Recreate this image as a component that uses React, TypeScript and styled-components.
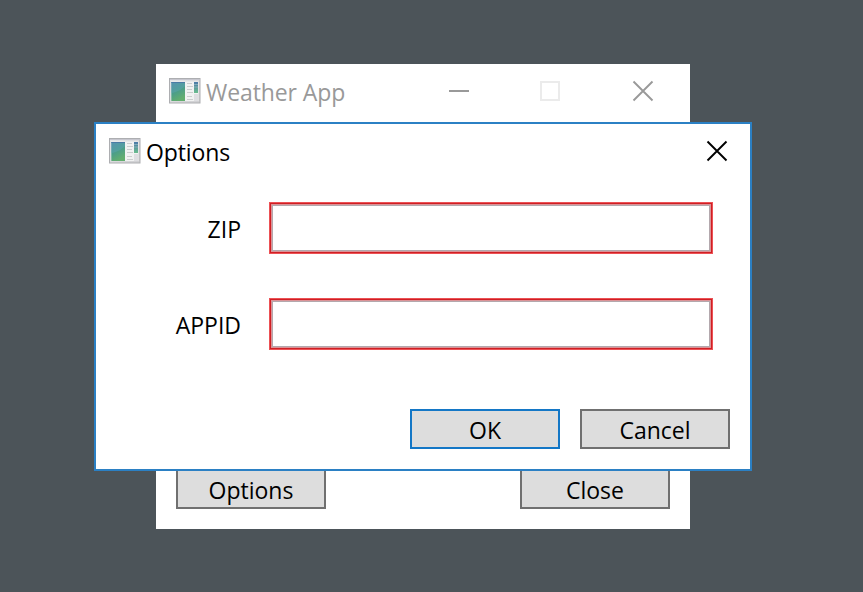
import React from "react";
import styled, { createGlobalStyle } from "styled-components";

const GlobalStyle = createGlobalStyle`
  *, *::before, *::after { box-sizing: border-box; }
  body { margin: 0; background: #4c5459; }
`;

const Desktop = styled.main`
  position: relative;
  width: 863px;
  height: 592px;
  overflow: hidden;
  background: #4c5459;
  color: #000;
  font-family: "Open Sans", "Noto Sans", sans-serif;
  font-size: 23px;
`;

const MainWindow = styled.section`
  position: absolute;
  left: 156px;
  top: 64px;
  width: 534px;
  height: 465px;
  display: flex;
  flex-direction: column;
  justify-content: space-between;
  background: #fff;
`;

const DialogWindow = styled.section`
  position: absolute;
  left: 94px;
  top: 122px;
  width: 658px;
  height: 349px;
  display: flex;
  flex-direction: column;
  border: 2px solid #2b80c4;
  background: #fff;
`;

const TitleBar = styled.header<{ $endPadding: number }>`
  display: flex;
  align-items: center;
  height: 54px;
  padding: 0 ${(p) => p.$endPadding}px 0 13px;
`;

const AppIcon = styled.svg`
  display: block;
  flex: none;
  width: 32px;
  height: 26px;
`;

const Title = styled.h1<{ $muted?: boolean }>`
  flex: 1;
  margin: 2px 0 0 5px;
  color: ${(p) => (p.$muted ? "#999" : "#000")};
  font-size: 23px;
  font-weight: 400;
  line-height: 32px;
  letter-spacing: -0.1px;
  white-space: nowrap;
`;

const WindowControls = styled.div`
  display: flex;
  gap: 71px;
`;

const ControlButton = styled.button<{ $wide?: boolean }>`
  display: block;
  width: 20px;
  height: 20px;
  padding: 0;
  border: 0;
  background: transparent;
  margin-left: ${(p) => (p.$wide ? "2px" : "0")};
`;

const Glyph = styled.svg`
  display: block;
  width: 20px;
  height: 20px;
  overflow: visible;
`;

const Form = styled.form`
  display: flex;
  flex: 1;
  flex-direction: column;
  padding: 24px 37px 0 0;
`;

const FieldRow = styled.div`
  display: grid;
  grid-template-columns: 145px 444px;
  column-gap: 28px;
  align-items: center;
  height: 52px;
  margin-bottom: 44px;
`;

const FieldLabel = styled.label`
  padding-top: 1px;
  line-height: 32px;
  text-align: right;
`;

const FieldInput = styled.input`
  width: 444px;
  height: 52px;
  padding: 0 6px;
  border: 1px solid #ec5155;
  border-radius: 0;
  outline: none;
  background: #fff;
  box-shadow: inset 0 0 0 1px #cf1f24, inset 0 0 0 2px #dc9296, inset 0 0 0 3px #b3a8ad;
  font: inherit;
`;

const ButtonRow = styled.footer<{ $spread?: boolean }>`
  display: flex;
  justify-content: ${(p) => (p.$spread ? "space-between" : "flex-end")};
  gap: 20px;
  padding: 0 20px 20px;
`;

const PushButton = styled.button<{ $default?: boolean }>`
  width: 150px;
  height: 40px;
  padding: 2px 0 0;
  border: 2px solid ${(p) => (p.$default ? "#1477c6" : "#707070")};
  border-radius: 0;
  background: #ddd;
  color: #000;
  font-family: inherit;
  font-size: 23px;
  line-height: 32px;
`;

function WindowIcon({ id }: { id: string }) {
  return (
    <AppIcon viewBox="0 0 32 26" aria-hidden="true">
      <defs>
        <linearGradient id={`${id}-pane`} x1="0" y1="0" x2="0.4" y2="1">
          <stop offset="0" stopColor="#4d86a9" />
          <stop offset="0.5" stopColor="#489b8d" />
          <stop offset="1" stopColor="#62ae6f" />
        </linearGradient>
        <linearGradient id={`${id}-strip`} x1="0" y1="0" x2="0" y2="1">
          <stop offset="0" stopColor="#4a78a8" />
          <stop offset="1" stopColor="#6bbd8d" />
        </linearGradient>
        <linearGradient id={`${id}-frame`} x1="0" y1="0" x2="1" y2="1">
          <stop offset="0" stopColor="#e6e6e8" />
          <stop offset="1" stopColor="#cfcfd2" />
        </linearGradient>
      </defs>
      <rect x="0.5" y="0.5" width="30.5" height="24.5" fill={`url(#${id}-frame)`} stroke="#adaeb1" />
      <path d="M1 1.5H30.5" stroke="#c6c6ce" />
      <rect x="2" y="3.5" width="27.5" height="19.5" fill="#f1f2f2" />
      <path d="M25 16H29.5V23H25Z" fill="#dedee1" />
      <rect x="2.3" y="4" width="13.7" height="19" fill={`url(#${id}-pane)`} />
      <path d="M2.3 15C8 14.5 13 11 16 8V4H2.3Z" fill="#6aa9bd" opacity="0.35" />
      <path d="M2.3 4.5H16" stroke="#4b7ba4" />
      <path d="M18 5.5H23M18 8.5H24M18 11.5H23M18 14.5H24M18 18.5H23M18 21.5H24" stroke="#cbcece" />
      <rect x="25" y="4" width="4" height="11" fill={`url(#${id}-strip)`} />
      <path d="M25 6.5H29M25 9H29" stroke="#a5c0cf" strokeWidth="0.6" />
    </AppIcon>
  );
}

function CloseGlyph({ color }: { color: string }) {
  return (
    <Glyph viewBox="0 0 20 20" aria-hidden="true">
      <path d="M0.5 0.5L19.5 19.5M19.5 0.5L0.5 19.5" fill="none" stroke={color} strokeWidth="1.9" />
    </Glyph>
  );
}

export default function App() {
  return (
    <>
      <GlobalStyle />
      <Desktop>
        <MainWindow aria-label="Weather App">
          <TitleBar $endPadding={37}>
            <WindowIcon id="weather" />
            <Title $muted>Weather App</Title>
            <WindowControls>
              <ControlButton aria-label="Minimize">
                <Glyph viewBox="0 0 20 20"><path d="M0 10H20" stroke="#999" strokeWidth="2" /></Glyph>
              </ControlButton>
              <ControlButton aria-label="Maximize" disabled>
                <Glyph viewBox="0 0 20 20"><rect x="1" y="1" width="18" height="18" fill="none" stroke="#ebebeb" strokeWidth="2" /></Glyph>
              </ControlButton>
              <ControlButton aria-label="Close window" $wide>
                <CloseGlyph color="#999" />
              </ControlButton>
            </WindowControls>
          </TitleBar>
          <ButtonRow $spread>
            <PushButton>Options</PushButton>
            <PushButton>Close</PushButton>
          </ButtonRow>
        </MainWindow>

        <DialogWindow role="dialog" aria-label="Options">
          <TitleBar $endPadding={23}>
            <WindowIcon id="options" />
            <Title>Options</Title>
            <ControlButton aria-label="Close dialog">
              <CloseGlyph color="#000" />
            </ControlButton>
          </TitleBar>
          <Form>
            <FieldRow>
              <FieldLabel htmlFor="zip">ZIP</FieldLabel>
              <FieldInput id="zip" />
            </FieldRow>
            <FieldRow>
              <FieldLabel htmlFor="appid">APPID</FieldLabel>
              <FieldInput id="appid" />
            </FieldRow>
          </Form>
          <ButtonRow>
            <PushButton $default>OK</PushButton>
            <PushButton>Cancel</PushButton>
          </ButtonRow>
        </DialogWindow>
      </Desktop>
    </>
  );
}
